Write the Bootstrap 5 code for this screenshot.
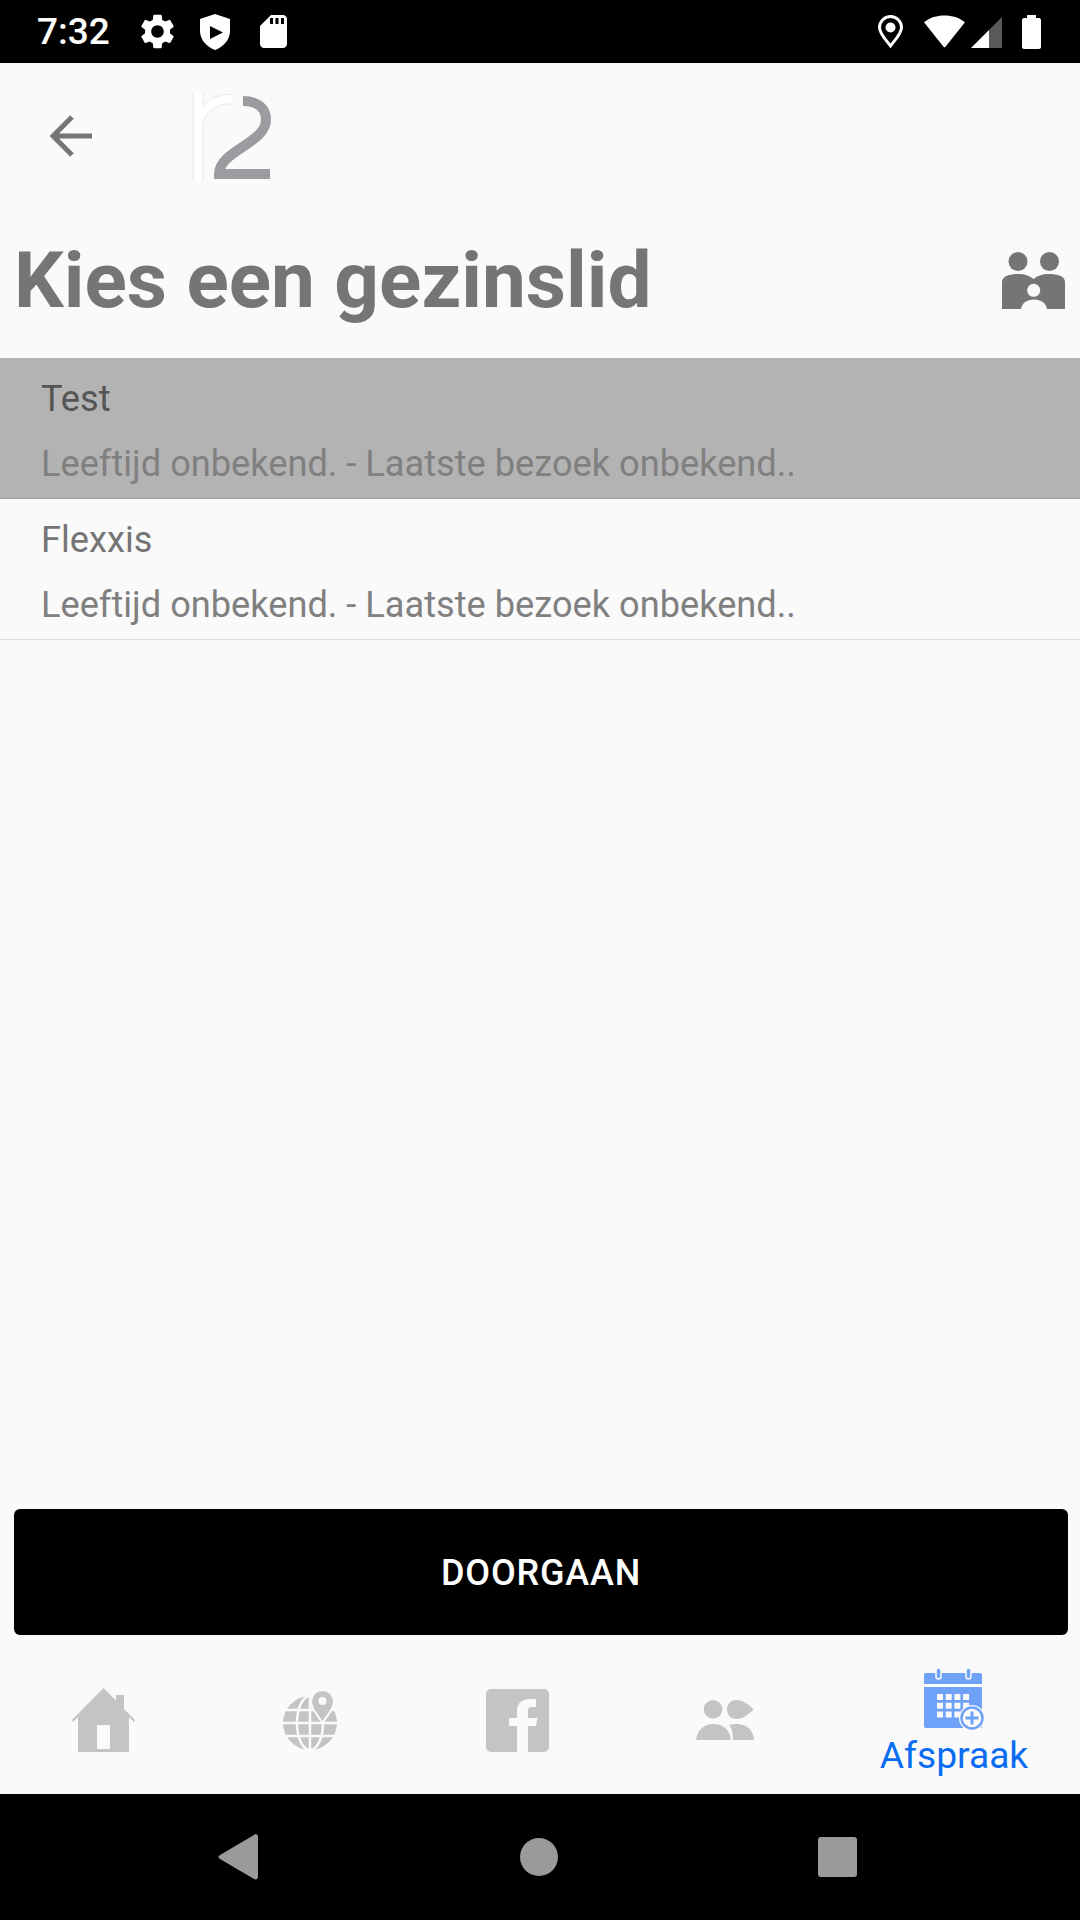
<!DOCTYPE html>
<html lang="en">
  <head>
    <meta charset="UTF-8" />
    <title>Kies een gezinslid</title>
    <meta name="viewport" content="width=device-width, initial-scale=1.0" />
    <link href="https://cdn.jsdelivr.net/npm/bootstrap@5.3.3/dist/css/bootstrap.min.css" rel="stylesheet" />
    <style>
      html, body { height: 100%; }
      body {
        width: 1080px;
        height: 1920px;
        background-color: #fafafa;
        font-family: Roboto, "Liberation Sans", sans-serif;
        overflow: hidden;
      }
      svg { display: block; flex: none; }
      .status-bar { height: 63px; background: #000; color: #fff; padding: 0 39px 0 37px; }
      .status-time { font-size: 37px; font-weight: 500; line-height: 63px; width: 104px; }
      .shield-icon { margin-left: 26px; }
      .sd-icon { margin-left: 30px; margin-right: auto; }
      .wifi-icon { margin-left: 21px; }
      .signal-icon { margin-left: 6px; }
      .battery-icon { margin-left: 20px; }
      .top-bar { height: 145px; padding-left: 50px; }
      .top-logo { margin-left: 100px; margin-top: 3px; }
      .title-row { height: 150px; padding: 0 15px 6px 14px; }
      .page-title { font-size: 78.3px; font-weight: 700; color: #757575; margin: 0; line-height: 1; }
      .member-list { border-radius: 0; }
      .member-row {
        background: transparent;
        border: 0;
        border-bottom: 1px solid #dedede;
        padding: 9px 41px 2px 41px;
        font-size: 36.2px;
        line-height: 64px;
        color: #757575;
      }
      .member-row.picked { background: #b3b3b3; border-bottom-color: #999; color: #555; }
      .member-sub { color: #808080; margin-top: 1px; }
      .go-wrap { padding: 0 12px 5px 14px; }
      .go-btn {
        height: 126px;
        background: #000;
        color: #fff;
        border: 0;
        border-radius: 6px;
        padding-top: 8px;
        font-size: 36px;
        font-weight: 500;
        letter-spacing: .8px;
      }
      .tab-bar { height: 154px; }
      .tab-item { width: 207px; padding-top: 6px; }
      .tab-now { width: 252px; padding-top: 28px; color: #0a6cf0; font-size: 37.2px; line-height: 48px; }
      .nav-bar { height: 126px; background: #000; }
      .nav-back { margin-left: 218px; }
      .nav-home { margin-left: 262px; }
      .nav-recent { margin-left: 260px; }
    </style>
  </head>
  <body class="d-flex flex-column">
    <div class="status-bar d-flex align-items-center">
      <div class="status-time">7:32</div>
      <svg width="33" height="35" viewBox="2.5 2 19 20" fill="#fff"><path d="M19.14 12.94c.04-.3.06-.61.06-.94 0-.32-.02-.64-.07-.94l2.03-1.58c.18-.14.23-.41.12-.61l-1.92-3.32c-.12-.22-.37-.29-.59-.22l-2.39.96c-.5-.38-1.03-.7-1.62-.94l-.36-2.54c-.04-.24-.24-.41-.48-.41h-3.84c-.24 0-.43.17-.47.41l-.36 2.54c-.59.24-1.13.57-1.62.94l-2.39-.96c-.22-.08-.47 0-.59.22L2.74 8.87c-.12.21-.08.47.12.61l2.03 1.58c-.05.3-.09.63-.09.94s.02.64.07.94l-2.03 1.58c-.18.14-.23.41-.12.61l1.92 3.32c.12.22.37.29.59.22l2.39-.96c.5.38 1.03.7 1.62.94l.36 2.54c.05.24.24.41.48.41h3.84c.24 0 .44-.17.47-.41l.36-2.54c.59-.24 1.13-.56 1.62-.94l2.39.96c.22.08.47 0 .59-.22l1.92-3.32c.12-.22.07-.47-.12-.61l-2.01-1.58zM12 15.6c-1.98 0-3.6-1.62-3.6-3.6s1.62-3.6 3.6-3.6 3.6 1.62 3.6 3.6-1.62 3.6-3.6 3.6z"/></svg>
      <svg class="shield-icon" width="30" height="36" viewBox="0 0 30 36"><path fill="#fff" d="M15 0 30 5V17C30 26 23 33 15 36 7 33 0 26 0 17V5Z"/><path fill="#000" d="M10 12 23 18.500 10 25Z"/></svg>
      <svg class="sd-icon" width="27" height="33" viewBox="0 0 27 33"><path fill="#fff" d="M11 0H23C25 0 27 2 27 4V29C27 31 25 33 23 33H4C2 33 0 31 0 29V11Z"/><path fill="#000" d="M10 3H13V9H10ZM15.500 3H18.500V9H15.500ZM21 3H24V9H21Z"/></svg>
      <svg width="25" height="34" viewBox="0 0 25 34"><path fill="none" stroke="#fff" stroke-width="3" d="M12.500 31C9 26 1.500 19 1.500 12.500A11 11 0 0 1 23.500 12.500C23.500 19 16 26 12.500 31Z"/><circle cx="12.500" cy="12.500" r="5" fill="#fff"/></svg>
      <svg class="wifi-icon" width="41" height="33" viewBox="0 0 42 33"><path fill="#fff" d="M0 7C6 2 13 0 21 0S36 2 42 7L22 32C21.500 33 20.500 33 20 32Z"/></svg>
      <svg class="signal-icon" width="31" height="32" viewBox="0 0 31 32"><path fill="#fff" d="M0 32 18 14V32Z"/><path fill="#5a5a5a" d="M18 14 31 1V32H18Z"/></svg>
      <svg class="battery-icon" width="19" height="34" viewBox="0 0 19 34"><path fill="#fff" d="M5 0H14V3H17C18 3 19 4 19 5V32C19 33 18 34 17 34H2C1 34 0 33 0 32V5C0 4 1 3 2 3H5Z"/></svg>
    </div>

    <div class="top-bar d-flex align-items-center">
      <svg width="42" height="42" viewBox="0 0 42 42" fill="none" stroke="#757575" stroke-width="5"><path d="M42 21H4M22 2 3 21 22 40"/></svg>
      <svg class="top-logo" width="80" height="88" viewBox="0 0 80 88" fill="none">
        <path stroke="#efefef" stroke-width="11" d="M6 88V0M6 36C6 16 22 6 40 6"/>
        <path stroke="#fff" stroke-width="8" d="M6 88V0M6 36C6 16 22 6 40 6"/>
        <path stroke="#9b9ba0" stroke-width="10" d="M51 8C65 8 74 15 74 27 74 50 27 58 27 81H78"/>
      </svg>
    </div>

    <div class="title-row d-flex align-items-center justify-content-between">
      <h1 class="page-title">Kies een gezinslid</h1>
      <svg width="63" height="57" viewBox="0 0 63 57">
        <circle cx="16" cy="9.500" r="9.500" fill="#757575"/>
        <circle cx="47.500" cy="9.500" r="9.500" fill="#757575"/>
        <path fill="#757575" d="M0 57V30C0 24 8 22 16 22 23 22 28 24 31.500 27 35 24 40 22 47 22 55 22 63 24 63 30V57Z"/>
        <circle cx="31.700" cy="38.300" r="6.500" fill="#fafafa"/>
        <path fill="#fafafa" d="M19 57C20 51 25 47.500 32 47.500S44 51 45 57Z"/>
      </svg>
    </div>

    <div class="list-group member-list">
      <div class="list-group-item member-row picked">
        <div>Test</div>
        <div class="member-sub">Leeftijd onbekend. - Laatste bezoek onbekend..</div>
      </div>
      <div class="list-group-item member-row">
        <div>Flexxis</div>
        <div class="member-sub">Leeftijd onbekend. - Laatste bezoek onbekend..</div>
      </div>
    </div>

    <div class="go-wrap mt-auto">
      <button class="btn go-btn w-100" type="button">DOORGAAN</button>
    </div>

    <div class="tab-bar d-flex">
      <div class="tab-item d-flex justify-content-center align-items-center">
        <svg width="63" height="64" viewBox="0 0 63 64" fill="#c4c4c4">
          <path d="M0 32 31.500 0 44 12.500V7H52V21L63 32 62 34 57 29V64H6V29L1 34Z"/>
          <path fill="#fafafa" d="M25 37H38V61H25Z"/>
        </svg>
      </div>
      <div class="tab-item d-flex justify-content-center align-items-center">
        <svg width="55" height="60" viewBox="0 0 55 60">
          <circle cx="27" cy="33" r="27" fill="#c4c4c4"/>
          <g fill="none" stroke="#fafafa" stroke-width="2.500">
            <path d="M0 20H54M0 33H54M0 46H54M27 6V60"/>
            <ellipse cx="27" cy="33" rx="13" ry="27"/>
          </g>
          <path fill="#c4c4c4" stroke="#fafafa" stroke-width="2" d="M39.500 33C36 27 28 19 28 11.500A11.500 11.500 0 0 1 51 11.500C51 19 43 27 39.500 33Z"/>
          <circle cx="39.500" cy="11" r="4" fill="#fafafa"/>
        </svg>
      </div>
      <div class="tab-item d-flex justify-content-center align-items-center">
        <svg width="63" height="63" viewBox="0 0 63 63">
          <rect width="63" height="63" rx="5" fill="#c4c4c4"/>
          <path fill="#fafafa" d="M31 63V37H23V29H31V22C31 14 36 10 44 10H50V18H46C43 18 42 19 42 22V29H51.500L50 37H42V63Z"/>
        </svg>
      </div>
      <div class="tab-item d-flex justify-content-center align-items-center">
        <svg width="58" height="40" viewBox="0 0 58 40" fill="#c4c4c4">
          <circle cx="17" cy="9.300" r="9.300"/>
          <path d="M0 40C1 30 8 24 17.500 24S34 30 35 40Z"/>
          <path d="M31 9.500C31 4 35 0 40.500 0 47 0 53 5 57.500 9.500 53 14 47 19 40.500 19 35 19 31 15 31 9.500Z"/>
          <path d="M33 25C45 22 57 26 58 40H37C37 33 36 28 33 25Z"/>
        </svg>
      </div>
      <div class="tab-now d-flex flex-column align-items-center">
        <svg width="61" height="63" viewBox="0 0 61 63">
          <path fill="#6ea1f8" d="M2 5H56C57 5 58 6 58 7V16H0V7C0 6 1 5 2 5ZM0 19H58V60H2C1 60 0 59 0 58Z"/>
          <rect x="12" y="0" width="5" height="11" rx="2.500" fill="#6ea1f8" stroke="#fafafa" stroke-width="1.500"/>
          <rect x="42" y="0" width="5" height="11" rx="2.500" fill="#6ea1f8" stroke="#fafafa" stroke-width="1.500"/>
          <path fill="#fafafa" d="M13 26h6v6h-6zM21.700 26h6v6h-6zM30.400 26h6v6h-6zM39.100 26h6v6h-6zM13 34.700h6v6h-6zM21.700 34.700h6v6h-6zM30.400 34.700h6v6h-6zM39.100 34.700h6v6h-6zM13 43.400h6v6h-6zM21.700 43.400h6v6h-6zM30.400 43.400h6v6h-6z"/>
          <circle cx="48" cy="50" r="13" fill="#fafafa"/>
          <circle cx="48" cy="50" r="10.500" fill="none" stroke="#6ea1f8" stroke-width="2.500"/>
          <path stroke="#6ea1f8" stroke-width="3" d="M41.500 50H54.500M48 43.500V56.500"/>
        </svg>
        <span>Afspraak</span>
      </div>
    </div>

    <div class="nav-bar d-flex align-items-center">
      <svg class="nav-back" width="40" height="46" viewBox="0 0 40 46"><path fill="#9a9a9a" d="M37 0C39 0 40 1 40 3V43C40 45 38 46 36 45L2 25C0 24 0 22 2 21L36 1Z"/></svg>
      <svg class="nav-home" width="38" height="40" viewBox="0 0 38 40"><circle cx="19" cy="20" r="19" fill="#9a9a9a"/></svg>
      <svg class="nav-recent" width="39" height="40" viewBox="0 0 39 40"><rect width="39" height="40" rx="3" fill="#9a9a9a"/></svg>
    </div>

    <script src="https://cdn.jsdelivr.net/npm/bootstrap@5.3.3/dist/js/bootstrap.bundle.min.js"></script>
  </body>
</html>
